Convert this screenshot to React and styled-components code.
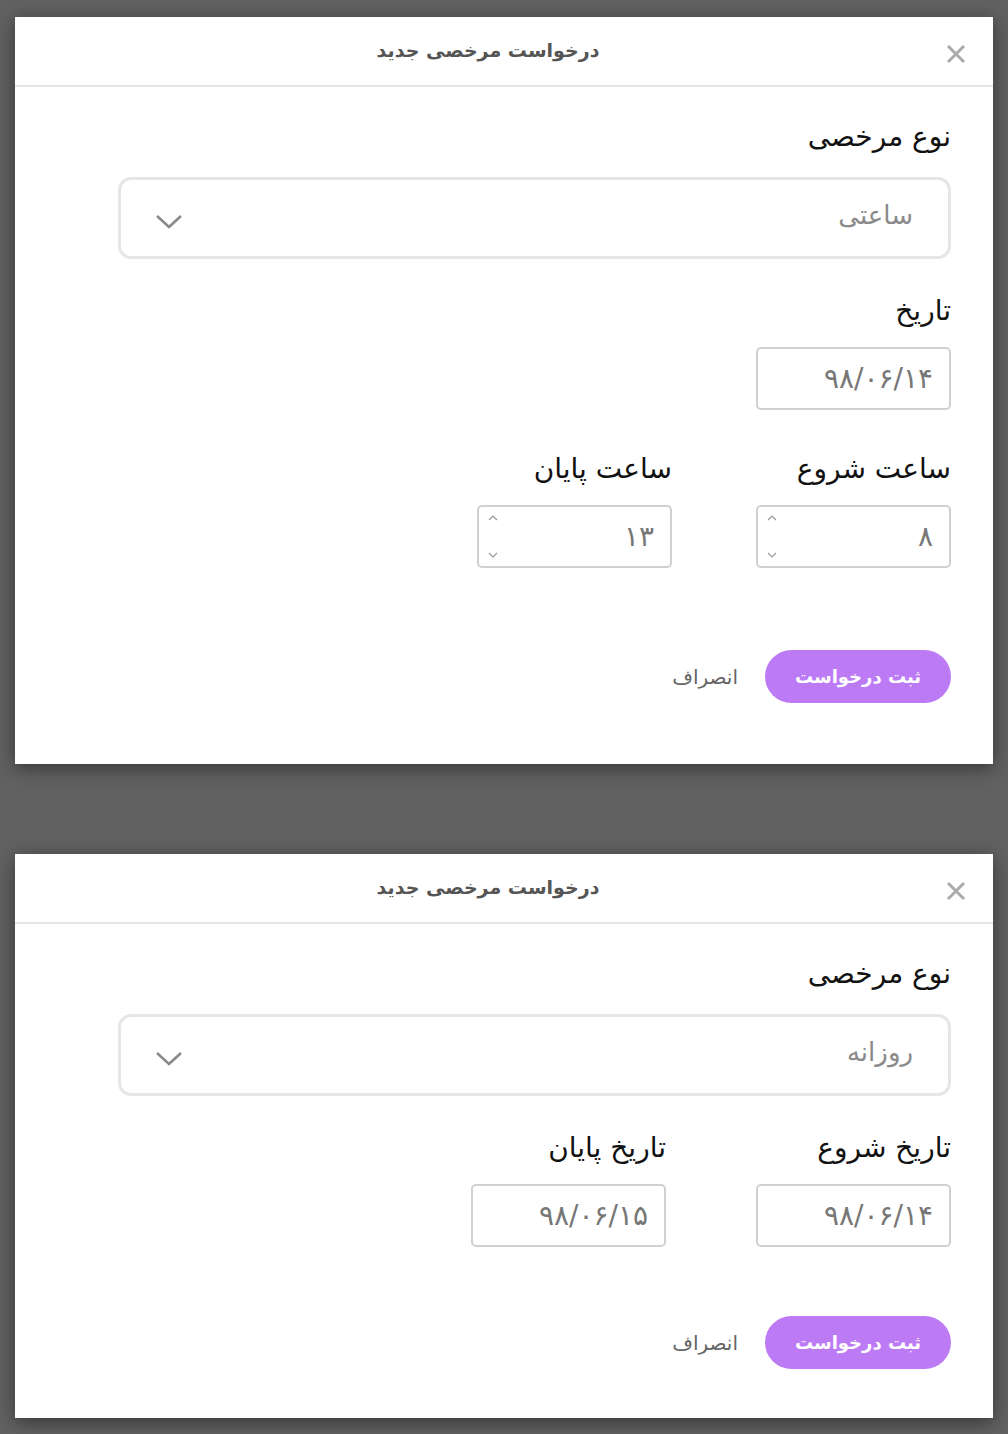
import React from "react";
import styled, { createGlobalStyle } from "styled-components";

const GlobalStyle = createGlobalStyle`
  html, body {
    margin: 0;
    padding: 0;
    background: #616161;
  }
  body {
    font-family: "DejaVu Sans", "Noto Sans", sans-serif;
  }
`;

const Page = styled.div`
  display: flex;
  flex-direction: column;
  gap: 90px;
  padding: 17px 15px 16px 15px;
`;

const Dialog = styled.section`
  direction: rtl;
  width: 978px;
  background: #fff;
  box-shadow: 0 4px 18px rgba(0, 0, 0, 0.45);
  padding-bottom: ${(p) => p.$bottom}px;
`;

const Header = styled.header`
  position: relative;
  height: 68px;
  display: flex;
  align-items: center;
  justify-content: center;
  padding-right: 32px;
  border-bottom: 2px solid #e6e6e6;
`;

const Title = styled.h2`
  margin: -3px 0 0;
  font-size: 19px;
  font-weight: bold;
  color: #555;
`;

const Close = styled.button`
  position: absolute;
  right: 26px;
  top: 26px;
  width: 22px;
  height: 22px;
  padding: 0;
  border: 0;
  background: none;
  display: flex;
  align-items: center;
  justify-content: center;
`;

const Body = styled.div`
  padding: 30px 42px 0 103px;
`;

const Field = styled.div`
  display: flex;
  flex-direction: column;
  width: ${(p) => (p.$narrow ? "195px" : "auto")};
`;

const Section = styled.div`
  margin-top: ${(p) => p.$top || 0}px;
`;

const Row = styled.div`
  display: flex;
  gap: ${(p) => p.$gap}px;
  margin-top: ${(p) => p.$top}px;
`;

const Label = styled.label`
  font-size: 28px;
  line-height: 40px;
  color: #111;
  margin-bottom: 16px;
`;

const Select = styled.div`
  margin-top: 4px;
  height: 82px;
  box-sizing: border-box;
  border: 3px solid #e6e6e6;
  border-radius: 13px;
  display: flex;
  align-items: center;
  justify-content: space-between;
  padding: 0 35px 0 34px;
`;

const SelectValue = styled.span`
  font-size: 26px;
  color: #8a8a8a;
  margin-top: -6px;
`;

const Chevron = styled.svg`
  margin-top: 8px;
`;

const Input = styled.div`
  position: relative;
  height: 63px;
  box-sizing: border-box;
  border: 2px solid #d0d0d0;
  border-radius: 5px;
  display: flex;
  align-items: center;
  padding: 0 16px;
  font-size: 28px;
  letter-spacing: 2.5px;
  color: #777;
`;

const Spinner = styled.div`
  position: absolute;
  left: 9px;
  top: 8px;
  bottom: 8px;
  display: flex;
  flex-direction: column;
  justify-content: space-between;
`;

const Actions = styled.div`
  display: flex;
  align-items: center;
  gap: 27px;
  margin-top: ${(p) => p.$top}px;
`;

const Primary = styled.button`
  width: 186px;
  height: 53px;
  border: 0;
  border-radius: 27px;
  background: #bd7af5;
  color: #fff;
  font-family: inherit;
  font-size: 18px;
  font-weight: bold;
  direction: rtl;
`;

const Cancel = styled.button`
  border: 0;
  background: none;
  padding: 0;
  font-family: inherit;
  font-size: 20px;
  color: #666;
  direction: rtl;
`;

function CloseIcon() {
  return (
    <svg width="20" height="20" viewBox="0 0 20 20">
      <path d="M2 2 L18 18 M18 2 L2 18" stroke="#aaa" strokeWidth="3" />
    </svg>
  );
}

function DownIcon() {
  return (
    <Chevron width="28" height="16" viewBox="0 0 28 16">
      <path d="M2 2 L14 13 L26 2" fill="none" stroke="#8a8a8a" strokeWidth="2.6" />
    </Chevron>
  );
}

function SpinArrows() {
  return (
    <Spinner>
      <svg width="10" height="6" viewBox="0 0 10 6">
        <path d="M1 5 L5 1 L9 5" fill="none" stroke="#999" strokeWidth="1.2" />
      </svg>
      <svg width="10" height="6" viewBox="0 0 10 6">
        <path d="M1 1 L5 5 L9 1" fill="none" stroke="#999" strokeWidth="1.2" />
      </svg>
    </Spinner>
  );
}

function DialogHeader() {
  return (
    <Header>
      <Title>درخواست مرخصی جدید</Title>
      <Close aria-label="close">
        <CloseIcon />
      </Close>
    </Header>
  );
}

function LeaveType({ value }) {
  return (
    <Field>
      <Label>نوع مرخصی</Label>
      <Select>
        <SelectValue>{value}</SelectValue>
        <DownIcon />
      </Select>
    </Field>
  );
}

function Buttons({ top }) {
  return (
    <Actions $top={top}>
      <Primary>ثبت درخواست</Primary>
      <Cancel>انصراف</Cancel>
    </Actions>
  );
}

function HourlyDialog() {
  return (
    <Dialog $bottom={61}>
      <DialogHeader />
      <Body>
        <LeaveType value="ساعتی" />
        <Section $top={32}>
          <Field $narrow>
            <Label>تاریخ</Label>
            <Input>۹۸/۰۶/۱۴</Input>
          </Field>
        </Section>
        <Row $gap={84} $top={39}>
          <Field $narrow>
            <Label>ساعت شروع</Label>
            <Input>
              ۸
              <SpinArrows />
            </Input>
          </Field>
          <Field $narrow>
            <Label>ساعت پایان</Label>
            <Input>
              ۱۳
              <SpinArrows />
            </Input>
          </Field>
        </Row>
        <Buttons top={82} />
      </Body>
    </Dialog>
  );
}

function DailyDialog() {
  return (
    <Dialog $bottom={49}>
      <DialogHeader />
      <Body>
        <LeaveType value="روزانه" />
        <Row $gap={90} $top={32}>
          <Field $narrow>
            <Label>تاریخ شروع</Label>
            <Input>۹۸/۰۶/۱۴</Input>
          </Field>
          <Field $narrow>
            <Label>تاریخ پایان</Label>
            <Input>۹۸/۰۶/۱۵</Input>
          </Field>
        </Row>
        <Buttons top={69} />
      </Body>
    </Dialog>
  );
}

export default function App() {
  return (
    <>
      <GlobalStyle />
      <Page>
        <HourlyDialog />
        <DailyDialog />
      </Page>
    </>
  );
}
